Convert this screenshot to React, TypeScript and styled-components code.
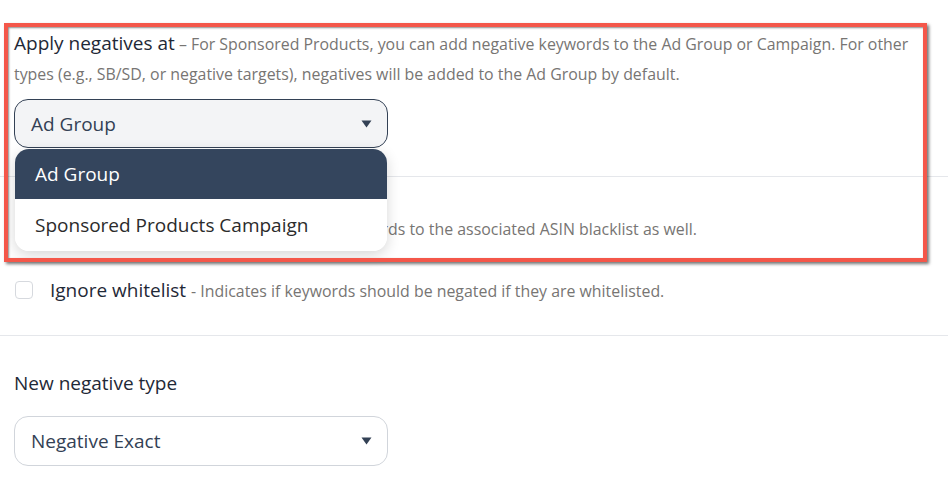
import React from 'react';
import styled, { createGlobalStyle } from 'styled-components';

const GlobalStyle = createGlobalStyle`
  html, body {
    margin: 0;
    padding: 0;
    background: #fff;
  }
  body {
    font-family: 'Open Sans', 'Noto Sans', Arial, sans-serif;
    color: #1f2937;
  }
`;

const Page = styled.div`
  position: relative;
  width: 948px;
  height: 491px;
  overflow: hidden;
`;

const Section = styled.section<{ $top: number; $bottom: number }>`
  padding: ${(p) => p.$top}px 30px ${(p) => p.$bottom}px 14px;
  border-bottom: 1px solid #e5e7eb;

  &:last-of-type {
    border-bottom: none;
  }
`;

const Intro = styled.p`
  margin: 0;
  line-height: 30px;
  font-size: 15.9px;
  color: #777573;
`;

const Label = styled.span`
  font-size: 19px;
  color: #1f2937;
`;

const FieldLabel = styled.div`
  font-size: 19px;
  line-height: 30px;
  color: #1f2937;
`;

const SelectWrap = styled.div<{ $mt: number }>`
  position: relative;
  width: 374px;
  margin-top: ${(p) => p.$mt}px;
`;

const SelectBox = styled.div<{ $open?: boolean }>`
  display: flex;
  align-items: center;
  justify-content: space-between;
  box-sizing: border-box;
  height: ${(p) => (p.$open ? 49 : 50)}px;
  padding: 0 15px 0 16px;
  border: 1px solid ${(p) => (p.$open ? '#334155' : '#d1d5db')};
  border-radius: 14px;
  background: ${(p) => (p.$open ? '#f3f4f6' : '#fff')};
  font-size: 19px;
  color: #334155;
`;

const Caret = () => (
  <svg width="11" height="8" viewBox="0 0 11 8">
    <path d="M0.5 0.5 H10.5 L5.5 7.5 Z" fill="#334155" />
  </svg>
);

const Menu = styled.ul`
  position: absolute;
  top: 100%;
  left: 1px;
  right: 1px;
  margin: 1px 0 0;
  padding: 0;
  list-style: none;
  background: #fff;
  border-radius: 14px;
  overflow: hidden;
  box-shadow: 0 4px 14px rgba(0, 0, 0, 0.16);
  z-index: 5;
`;

const MenuItem = styled.li<{ $active?: boolean }>`
  display: flex;
  align-items: center;
  height: ${(p) => (p.$active ? 50 : 52)}px;
  padding: 0 20px;
  font-size: 19px;
  background: ${(p) => (p.$active ? '#34455d' : '#fff')};
  color: ${(p) => (p.$active ? '#fff' : '#2b2b2b')};
`;

const CheckRow = styled.label`
  display: flex;
  align-items: center;
  height: 30px;
  gap: 17px;
  padding-left: 1px;

  & + & {
    margin-top: 32px;
  }
`;

const Box = styled.span`
  width: 18px;
  height: 18px;
  box-sizing: border-box;
  border: 1px solid #d6d9de;
  border-radius: 4px;
  background: #fff;
`;

const CheckText = styled.span`
  font-size: 19px;
  color: #1f2937;
  white-space: nowrap;
`;

const Hint = styled.span`
  font-size: 15.9px;
  color: #777573;
`;

const Highlight = styled.div`
  position: absolute;
  left: 4px;
  top: 23px;
  width: 915px;
  height: 231px;
  border: 4px solid #f4574a;
  box-shadow: 2px 2px 3px rgba(0, 0, 0, 0.55), inset 1px 1px 2px rgba(0, 0, 0, 0.45);
  pointer-events: none;
  z-index: 10;
`;

export default function App(): React.ReactElement {
  return (
    <Page>
      <GlobalStyle />
      <Section $top={28} $bottom={28}>
        <Intro>
          <Label>Apply negatives at</Label> – For Sponsored Products, you can add negative
          keywords to the Ad Group or Campaign. For other types (e.g., SB/SD, or negative
          targets), negatives will be added to the Ad Group by default.
        </Intro>
        <SelectWrap $mt={10}>
          <SelectBox $open>
            Ad Group
            <Caret />
          </SelectBox>
          <Menu>
            <MenuItem $active>Ad Group</MenuItem>
            <MenuItem>Sponsored Products Campaign</MenuItem>
          </Menu>
        </SelectWrap>
      </Section>

      <Section $top={36} $bottom={30}>
        <CheckRow>
          <Box />
          <CheckText>
            Blacklist ASINs <Hint>- Also adds negative keywords to the associated ASIN blacklist as well.</Hint>
          </CheckText>
        </CheckRow>
        <CheckRow>
          <Box />
          <CheckText>
            Ignore whitelist <Hint>- Indicates if keywords should be negated if they are whitelisted.</Hint>
          </CheckText>
        </CheckRow>
      </Section>

      <Section $top={32} $bottom={0}>
        <FieldLabel>New negative type</FieldLabel>
        <SelectWrap $mt={18}>
          <SelectBox>
            Negative Exact
            <Caret />
          </SelectBox>
        </SelectWrap>
      </Section>

      <Highlight />
    </Page>
  );
}
